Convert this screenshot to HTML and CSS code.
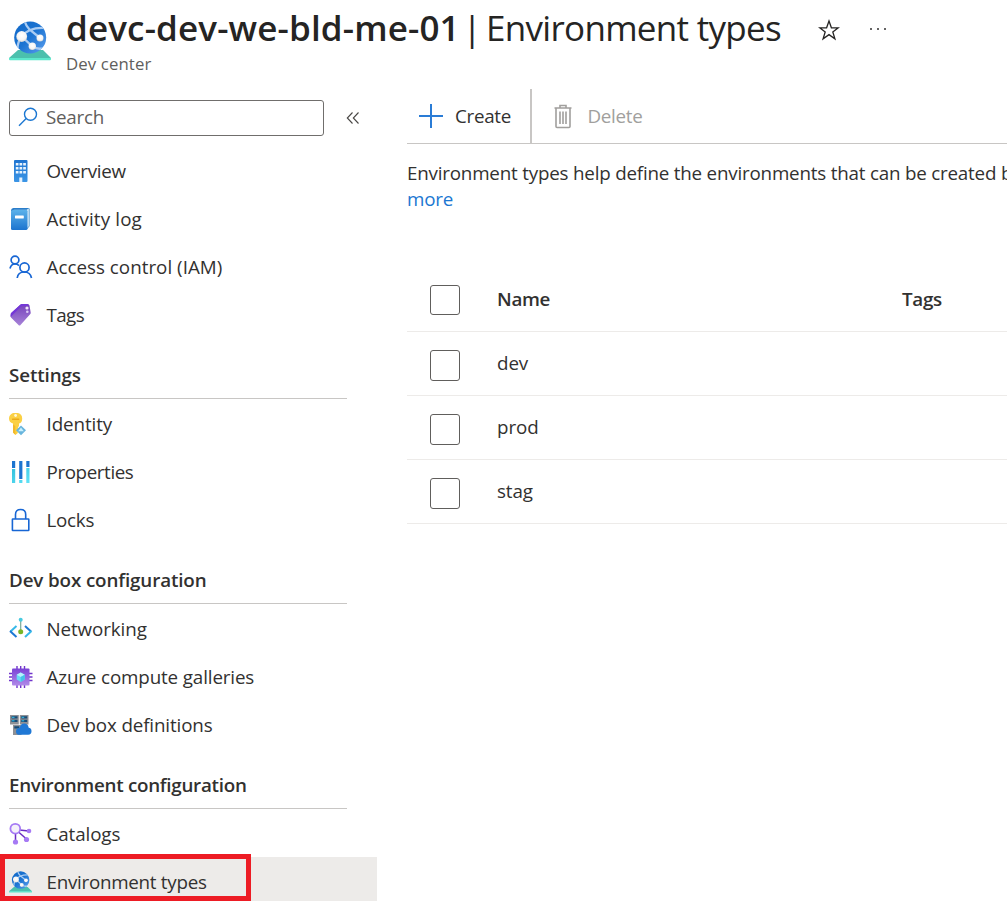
FILE: index.html
```html
<!DOCTYPE html>
<html lang="en">
<head>
<meta charset="utf-8">
<title>Environment types</title>
<link rel="stylesheet" href="styles.css">
</head>
<body>
<svg class="defs" width="0" height="0" aria-hidden="true">
  <defs>
    <linearGradient id="globe" x1="0" y1="0" x2="1" y2="1"><stop offset="0" stop-color="#1068c8"/><stop offset=".5" stop-color="#1c74d2"/><stop offset="1" stop-color="#5ea0ef"/></linearGradient>
    <linearGradient id="blue" x1="0" y1="0" x2="0" y2="1"><stop offset="0" stop-color="#1f74d0"/><stop offset="1" stop-color="#3c96e6"/></linearGradient>
    <linearGradient id="book" x1="0" y1="0" x2="0" y2="1"><stop offset="0" stop-color="#5bb2ea"/><stop offset="1" stop-color="#1c74cf"/></linearGradient>
    <linearGradient id="purple" x1="0" y1="0" x2="0" y2="1"><stop offset="0" stop-color="#7a42d6"/><stop offset="1" stop-color="#b08ae8"/></linearGradient>
    <linearGradient id="tag" x1="0" y1="0" x2="0" y2="1"><stop offset="0" stop-color="#7540bb"/><stop offset="1" stop-color="#a783d8"/></linearGradient>
    <linearGradient id="cyan" x1="0" y1="0" x2="1" y2="1"><stop offset="0" stop-color="#32c0dc"/><stop offset="1" stop-color="#62e4f8"/></linearGradient>
    <radialGradient id="ball" cx=".5" cy=".4" r=".6"><stop offset="0" stop-color="#fff"/><stop offset=".7" stop-color="#f4f4f4"/><stop offset="1" stop-color="#d2d2d2"/></radialGradient>
    <clipPath id="globe-clip"><circle cx="21.2" cy="16.5" r="16"/></clipPath>
    <symbol id="env" viewBox="0 0 42 40">
      <path d="M9 29h25l8 8v1H0v-1z" fill="#4bc0ad"/><path d="M0 37h42v1.200q0 1-1 1H1q-1 0-1-1z" fill="#5de8cc"/>
      <circle cx="21.2" cy="16.5" r="16" fill="url(#globe)"/>
      <g clip-path="url(#globe-clip)" fill="none" stroke="#a9ccf3" stroke-width="2.300">
        <path d="M15.500 0q1.500 5 5 8.500L31 17M12.700 15.500Q20 6 36 7M12.700 15.500l10.600 9.800M12.700 15.500Q8.500 21 8.500 28M23.300 25.300q6 4 12 1.500"/>
      </g>
      <circle cx="12.700" cy="15.500" r="5.400" fill="url(#ball)"/><circle cx="31" cy="17" r="3.500" fill="url(#ball)"/><circle cx="23.300" cy="25.300" r="3.700" fill="url(#ball)"/>
    </symbol>
  </defs>
</svg>
<header class="header">
  <svg class="header-icon" width="42" height="40"><use href="#env"/></svg>
  <div>
    <h1 class="title"><span class="title-name">devc-dev-we-bld-me-01</span><span class="title-bar">|</span><span class="title-page">Environment types</span></h1>
    <p class="subtitle">Dev center</p>
  </div>
  <svg class="star" width="22" height="22" viewBox="0 0 22 22" fill="none" stroke="#252423" stroke-width="1.300"><path d="M11 2l2.400 6.800h6.900l-5.500 4.200 2.100 6.800-5.900-4.200-5.900 4.200 2.100-6.800-5.500-4.200h6.900z"/></svg>
  <svg class="dots" width="18" height="4" fill="#323130"><circle cx="2" cy="2" r="1"/><circle cx="9" cy="2" r="1"/><circle cx="16" cy="2" r="1"/></svg>
</header>
<div class="body">
  <nav class="sidebar">
    <div class="search-row">
      <div class="search">
        <svg width="20" height="20" viewBox="0 0 20 20" fill="none" stroke="#1b77d2" stroke-width="1.400"><circle cx="12.500" cy="7.200" r="6"/><path d="M8.200 11.500L1 18.700"/></svg>
        <span>Search</span>
      </div>
      <svg width="14" height="14" viewBox="0 0 14 14" fill="none" stroke="#484644" stroke-width="1.100"><path d="M6.500 1.500L1.300 7l5.200 5.500M12.500 1.500L7.300 7l5.200 5.500"/></svg>
    </div>
    <a class="item tight"><svg class="icon" viewBox="0 0 24 24"><rect x="5" y="1" width="13.500" height="22" rx="1" fill="url(#blue)"/><g fill="#e8f3fd"><path d="M6.800 4h2.700v2.500H6.800zM10.500 4h2.700v2.500h-2.700zM14.200 4h2.700v2.500h-2.700zM6.800 8h2.700v2.500H6.800zM10.500 8h2.700v2.500h-2.700zM14.200 8h2.700v2.500h-2.700zM6.800 12h2.700v2.500H6.800zM10.500 12h2.700v2.500h-2.700zM14.200 12h2.700v2.500h-2.700zM10.300 18.500h3V23h-3z"/></g></svg><span>Overview</span></a>
    <a class="item wide"><svg class="icon" viewBox="0 0 24 24"><path d="M4 1h15.500q1.300 0 1.300 1.300V19L18.500 22H4z" fill="#6fabd9"/><path d="M5 2h14.700v17L18 21H4z" fill="#d9edfb"/><rect x="2" y="2.800" width="16.500" height="20.200" rx="1.500" fill="url(#book)"/><path d="M2 4.300Q2 1 5 1h14.500L18 2.800H5q-2 0-3 1.500" fill="#2a7dca"/><rect x="6" y="8.500" width="8.800" height="3" rx=".4" fill="#fff"/></svg><span>Activity log</span></a>
    <a class="item even"><svg class="icon" viewBox="0 0 24 24" fill="none" stroke="#1766d4" stroke-width="1.700"><circle cx="6" cy="5" r="3.900"/><path d="M1 13.500Q2 9 6 9q2.300 0 4 1.500"/><circle cx="15.500" cy="12.500" r="4.600"/><path d="M8.200 23q.8-6 7-6t7.300 6"/></svg><span>Access control (IAM)</span></a>
    <a class="item tightest"><svg class="icon" viewBox="0 0 24 24"><path d="M2 10.500L11 2q1-1 2-1h5.500q1.500 0 2 1.500l1.200 7q.2 1-.6 1.800L11.500 22q-1 1-2 0L2 14.500q-1-2 0-4z" fill="url(#tag)"/><path d="M1.700 14V11q0-.7.800-1.400L11 2q1-1 2.300-1h4.700q1.500 0 2 1.500l-6 .5q-1.500 0-2.500 1z" fill="#7437d8"/><circle cx="18" cy="5" r="1.600" fill="#efe6fb"/><circle cx="18.300" cy="8.800" r="1.300" fill="#d9c9f4"/></svg><span>Tags</span></a>
    <h2 class="group">Settings</h2>
    <a class="item"><svg class="icon" viewBox="0 0 24 24"><path d="M4 1h5q4.200 1.200 4.200 5.500T10 11.500V14L8.800 15.500 10 17l-1.200 1.500V21L6.500 23 4 20.500v-9Q0 10.500 0 6.500T4 1z" fill="#fbd044"/><path d="M4 12.500l2.300 1.500v8.800L4 20.500z" fill="#f3b92a"/><rect x="3" y="6.500" width="7.300" height="1.600" rx=".6" fill="#eba91b"/><circle cx="6.600" cy="3.500" r="1.400" fill="#fff7dc"/><path d="M12 13.500l5 4.800-5 4.900-5-4.900z" fill="#68b5dd"/><path d="M12 15.500l2.800 3.800H9.200z" fill="#c9f0fd"/></svg><span>Identity</span></a>
    <a class="item tighter"><svg class="icon" viewBox="0 0 24 24"><g fill="#1c74d0"><path d="M3 1h3.200v7H3zM10.200 1h3.200v18h-3.200zM17.300 1h3.200v6h-3.200z"/></g><g fill="url(#cyan)"><path d="M3 9h3.200v14H3zM10.200 20h3.200v3h-3.200zM17.300 8h3.200v15h-3.200z"/></g></svg><span>Properties</span></a>
    <a class="item tight"><svg class="icon" viewBox="0 0 24 24" fill="none" stroke="#1766d4" stroke-width="1.600"><rect x="3.400" y="11" width="16.400" height="11.500" rx=".4"/><path d="M6.500 11V6.500Q6.500 1.500 11.600 1.500t5.100 5V11"/></svg><span>Locks</span></a>
    <h2 class="group">Dev box configuration</h2>
    <a class="item"><svg class="icon" viewBox="0 0 24 24" fill="none"><path d="M7.500 9L1.500 14.500" stroke="#35b8e8" stroke-width="2"/><path d="M1 14l6.500 6" stroke="#1c78d4" stroke-width="2"/><path d="M16 9l6 5.500" stroke="#1c78d4" stroke-width="2"/><path d="M22.500 14L16 20" stroke="#35b8e8" stroke-width="2"/><path d="M11.700 3v11" stroke="#78a89a" stroke-width="1.200"/><circle cx="11.700" cy="2.700" r="2" fill="#48cadf"/><circle cx="11.700" cy="14.700" r="2.500" fill="#78b528"/></svg><span>Networking</span></a>
    <a class="item snug"><svg class="icon" viewBox="0 0 24 24"><path d="M8 1v22M11.700 1v22M15.500 1v22M0 8.500h23.500M0 12h23.500M0 15.500h23.500" stroke="#7135cb" stroke-width="1.400"/><rect x="3" y="3.500" width="17.500" height="17" rx="1" fill="url(#purple)"/><path d="M11.700 7.500l4 2.300v4.800L11.700 17 7.700 14.600V9.800z" fill="#68d9f5"/><path d="M11.700 7.500l4 2.300-4 2.200-4-2.200z" fill="#b6f2fd"/><path d="M11.700 12l4-2.200v4.800l-4 2.400z" fill="#45c2e8"/></svg><span>Azure compute galleries</span></a>
    <a class="item snug"><svg class="icon" viewBox="0 0 24 24"><g fill="#8e9095"><path d="M1 2h8.800v9.500H1zM10.800 2h8.700v9.500h-8.700zM4 12h8.500v10H4z"/></g><g fill="#174a76"><path d="M2.500 3.200h6v2.200h-6zM2.500 6.700h6v2.200h-6zM12.200 3.200h6v2.200h-6zM12.200 6.700h6v2.200h-6zM5.300 13.200h5v2.200h-5z"/></g><path d="M3 4.300h2.500M3 7.800h2.500M12.700 4.300h2.500M12.700 7.800h2.500" stroke="#35c7f0"/><path d="M10.500 21.800q-3.500 0-3.500-3.400 0-3.200 3.600-3.600 1.200-4.300 4.500-4.300 3.900 0 4.600 4.200 2.800.4 2.800 3.500t-3.300 3.600z" fill="#1f78d5"/></svg><span>Dev box definitions</span></a>
    <h2 class="group tight">Environment configuration</h2>
    <a class="item"><svg class="icon" viewBox="0 0 24 24" fill="none"><path d="M6.500 12v8M9 9.500l9 8M10.500 8l9 1" stroke="#6a2bc2" stroke-width="1.500"/><circle cx="6.300" cy="6.700" r="4.900" fill="#f5f1fa" stroke="#a67af4" stroke-width="1.800"/><g fill="#a67af4"><circle cx="6.500" cy="20" r="2.600"/><circle cx="17.500" cy="17.500" r="2.600"/><circle cx="20" cy="9" r="2.300"/></g></svg><span>Catalogs</span></a>
    <a class="item item-active tight"><svg class="icon" viewBox="0 0 24 24"><use href="#env" width="23" height="22" y="1"/></svg><span>Environment types</span></a>
  </nav>
  <main class="main">
    <div class="toolbar">
      <div class="command create"><svg width="26" height="26" viewBox="0 0 26 26" fill="none" stroke="#2a7cd6" stroke-width="2"><path d="M13 1v24M1 13h24"/></svg><span>Create</span></div>
      <div class="command delete"><svg width="18" height="25" viewBox="0 0 18 25" fill="none" stroke="#a19f9d" stroke-width="1.600"><path d="M.5 4h17M6 4V1.500h6V4M2 4v18.500q0 1 1 1h12q1 0 1-1V4M6 7.500V20M9 7.500V20M12 7.500V20"/></svg><span>Delete</span></div>
    </div>
    <p class="intro">Environment types help define the environments that can be created b<br><a class="link">more</a></p>
    <div class="table">
      <div class="row row-head"><span class="check"></span><span class="cell">Name</span><span>Tags</span></div>
      <div class="row"><span class="check"></span><span class="cell">dev</span></div>
      <div class="row"><span class="check"></span><span class="cell">prod</span></div>
      <div class="row"><span class="check"></span><span class="cell">stag</span></div>
    </div>
  </main>
</div>
<div class="highlight"></div>
</body>
</html>
```
FILE: styles.css
```css
* { box-sizing: border-box; }
body {
  margin: 0;
  width: 1007px;
  height: 901px;
  overflow: hidden;
  position: relative;
  background: #fff;
  color: #323130;
  font: 18.8px/26px "Open Sans", "Noto Sans", sans-serif;
}
h1, h2, p { margin: 0; }
svg { flex: none; display: block; }
.defs { position: absolute; }

.header { display: flex; height: 88px; padding-left: 9px; }
.header-icon { margin: 21px 15px 0 0; }
.title { display: flex; margin-top: 4px; height: 49px; font-size: 35px; line-height: 48px; font-weight: 400; color: #252423; white-space: nowrap; }
.title-name { font-weight: 600; width: 392px; letter-spacing: .15px; }
.title-bar { width: 28px; text-align: center; }
.title-page { width: 295px; letter-spacing: -.7px; }
.subtitle { font-size: 16.8px; line-height: 22px; color: #605e5c; letter-spacing: .1px; }
.star { margin: 19px 0 0 37px; }
.dots { margin: 27px 0 0 29px; }

.body { display: flex; height: 813px; }
.sidebar { width: 377px; flex: none; }
.search-row { display: flex; align-items: center; gap: 22px; height: 58px; padding: 1px 0 0 9px; }
.search { display: flex; align-items: center; gap: 8px; width: 315px; height: 36px; padding: 0 0 2px 8px; border: 1px solid #706e6c; border-radius: 3px; color: #605e5c; letter-spacing: -.25px; }
.item { display: flex; align-items: center; gap: 13.5px; height: 48px; padding: 1px 0 0 9px; white-space: nowrap; letter-spacing: -.1px; }
.item-active { background: #edebe9; }
.icon { width: 24px; height: 24px; }
.group { width: 338px; height: 61px; margin: 0 0 0 9px; padding-top: 24px; border-bottom: 1px solid #c8c6c4; font-size: 18.8px; line-height: 26px; font-weight: 600; letter-spacing: -.12px; }
.wide { letter-spacing: .15px; }
.even { letter-spacing: .02px; }
.snug { letter-spacing: -.13px; }
.tight { letter-spacing: -.27px; }
.tighter { letter-spacing: -.4px; }
.tightest { letter-spacing: -.6px; }

.main { width: 600px; margin-left: 30px; overflow: hidden; }
.toolbar { display: flex; height: 56px; padding-top: 1px; border-bottom: 1px solid #c8c6c4; letter-spacing: -.3px; }
.command { display: flex; align-items: center; }
.create { width: 125px; gap: 11px; padding-left: 11px; border-right: 2px solid #c8c6c4; }
.delete { gap: 15.5px; padding-left: 22px; color: #a19f9d; }
.intro { margin-top: 16px; white-space: nowrap; letter-spacing: -.2px; }
.link { color: #1b77d2; }
.table { margin-top: 55px; letter-spacing: -.1px; }
.row { display: flex; align-items: center; height: 64px; padding-left: 23px; border-bottom: 1px solid #edebe9; }
.row .check { height: 31px; margin-top: 4px; }
.row .cell { margin-top: -1px; }
.row-head { height: 65px; padding-bottom: 1px; font-weight: 600; letter-spacing: -.3px; }
.row-head .check { height: 30px; margin-top: 2px; }
.row-head .cell { margin-top: 0; }
.check { width: 30px; margin-right: 37px; border: 1px solid #605e5c; border-radius: 3px; }
.cell { width: 405px; }

.highlight { position: absolute; left: 0; top: 854px; width: 251px; height: 47px; border: 5px solid #ed1c24; }
```
